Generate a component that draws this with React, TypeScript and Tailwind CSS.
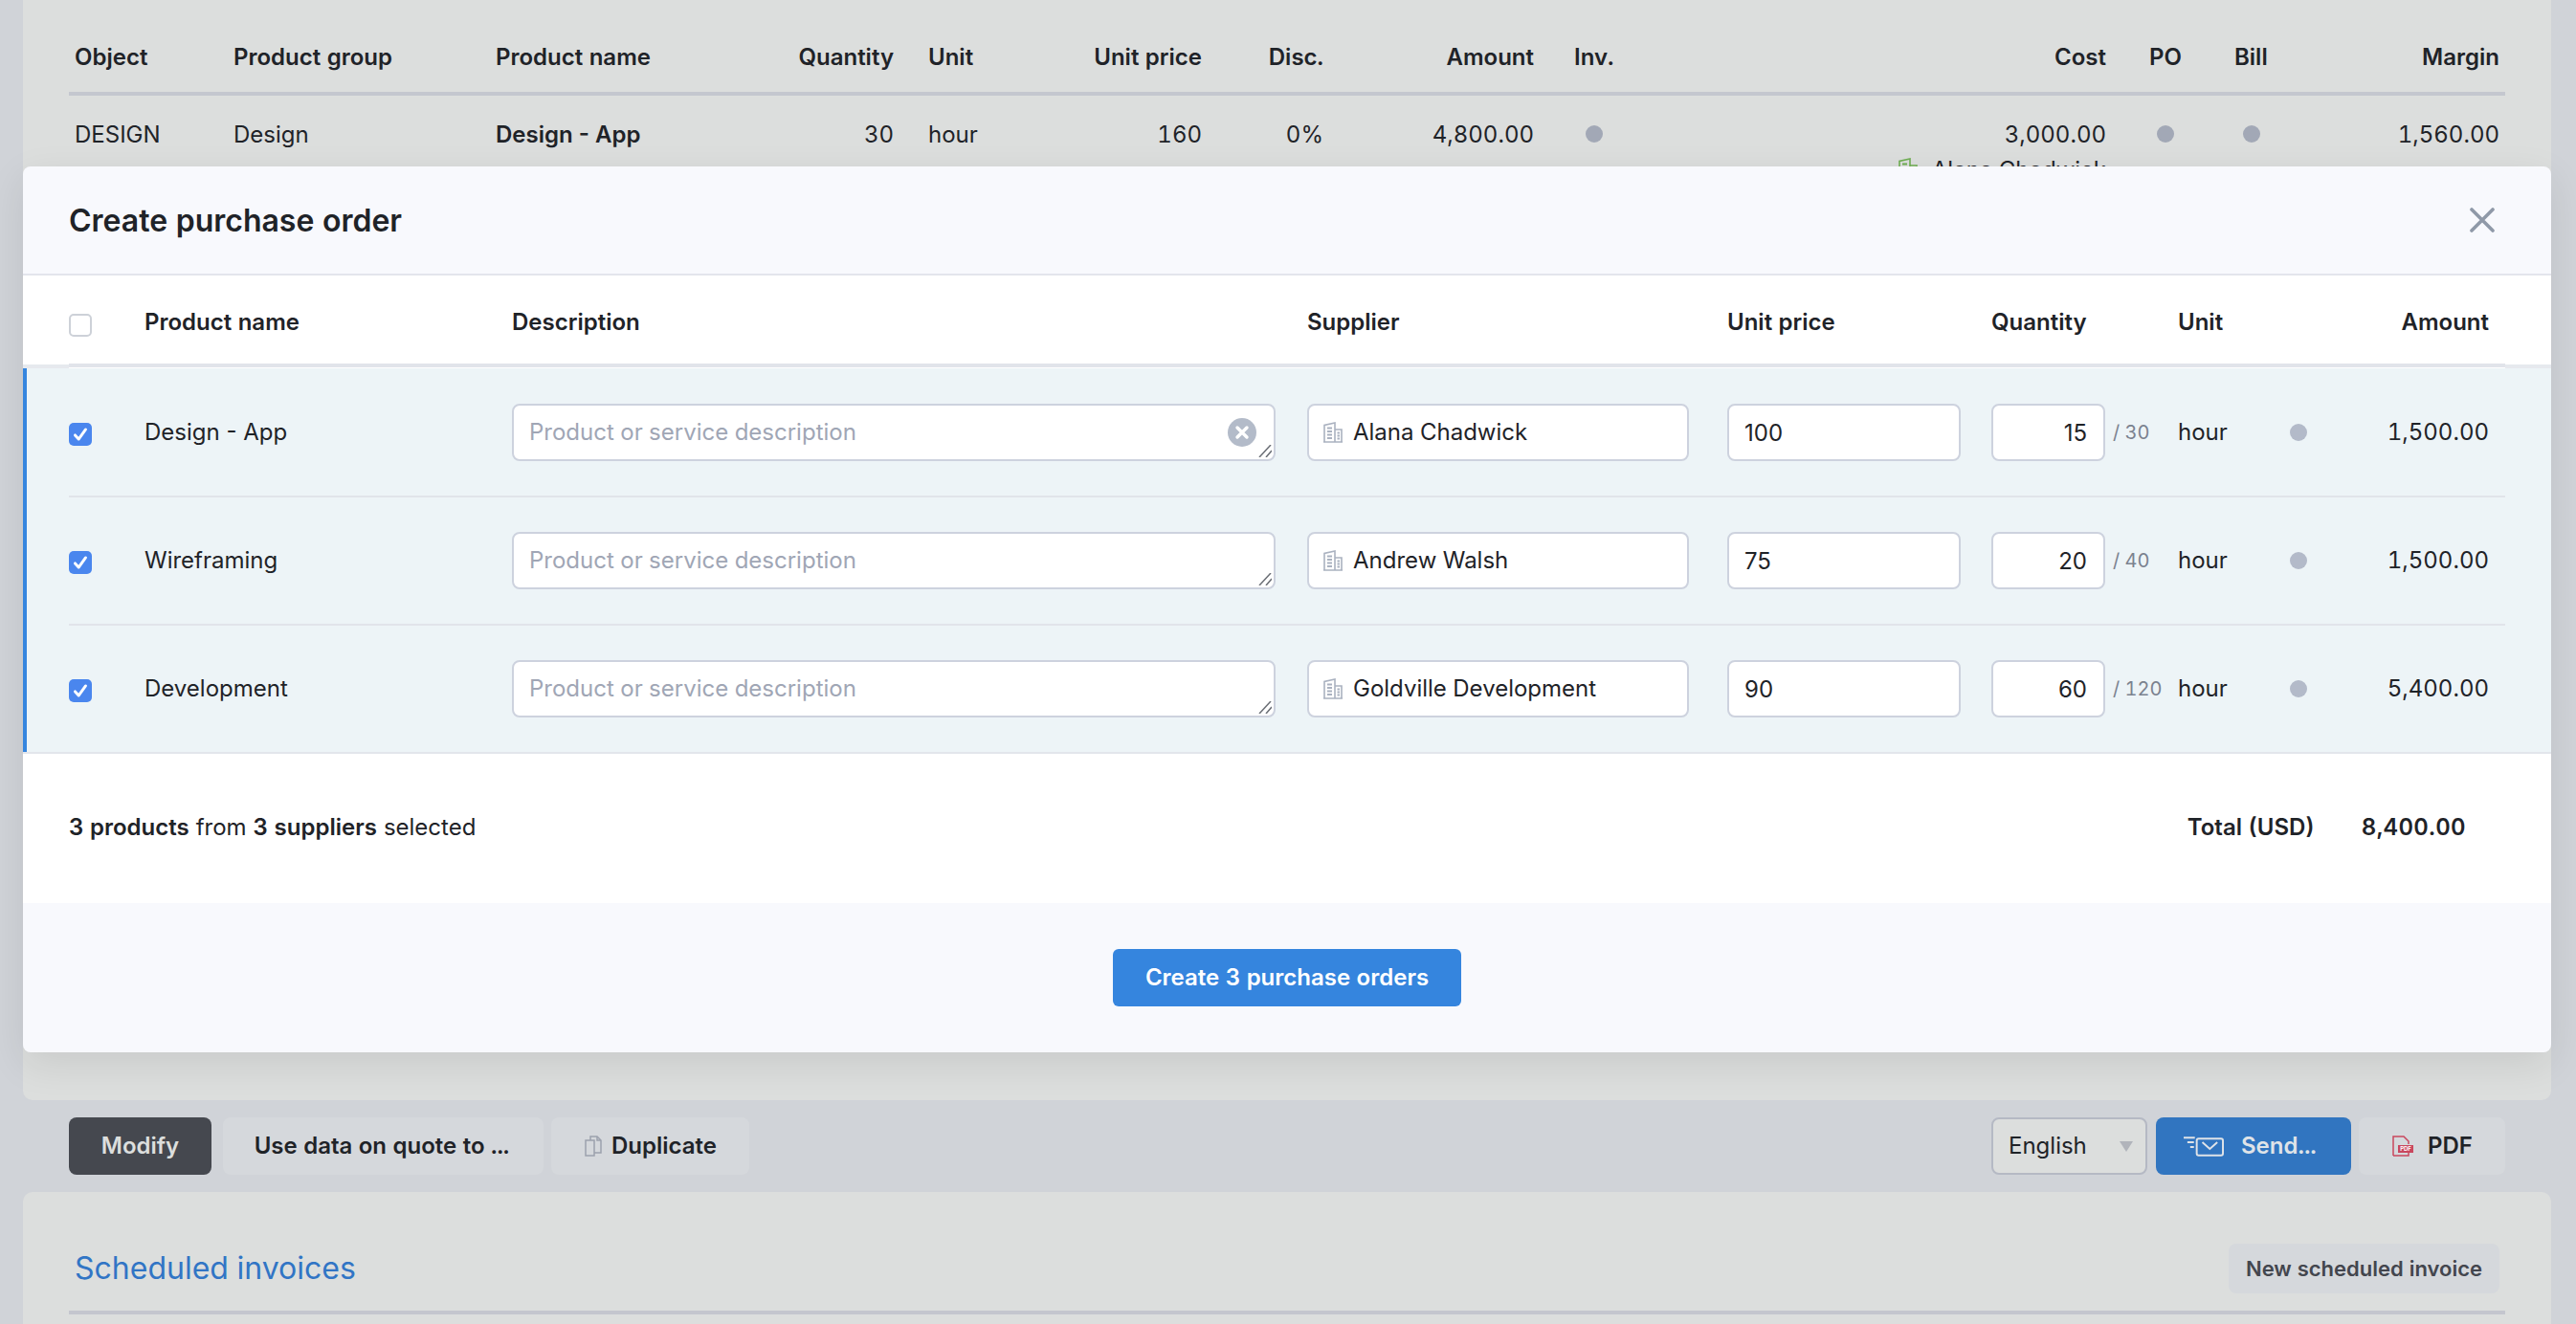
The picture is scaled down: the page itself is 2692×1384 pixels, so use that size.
import React from 'react';

const BuildingIcon = ({ className = 'text-[#aab2c0]' }: { className?: string }) => (
  <svg viewBox="0 0 20 22" className={`w-[20px] h-[22px] shrink-0 ${className}`} fill="none" stroke="currentColor" strokeWidth="1.6">
    <path d="M1 21V3.5L12 1v20M12 8h7v13M0 21h20" />
    <path d="M4 6.5h5M4 10h5M4 13.5h5M4 17h5M14.5 11.5h2.5M14.5 14.5h2.5M14.5 17.5h2.5" strokeWidth="1.8" />
  </svg>
);

const CheckBox = ({ checked }: { checked?: boolean }) =>
  checked ? (
    <span className="flex items-center justify-center w-[24px] h-[24px] rounded-[5px] bg-[#4a86ee]">
      <svg viewBox="0 0 24 24" className="w-[22px] h-[22px]" fill="none" stroke="#fff" strokeWidth="3.2" strokeLinecap="round" strokeLinejoin="round">
        <path d="M6 13l4 4.5 8-11" />
      </svg>
    </span>
  ) : (
    <span className="block w-[24px] h-[24px] rounded-[5px] border-2 border-[#cdd1d8] bg-white" />
  );

const Dot = ({ className }: { className: string }) => <span className={`block w-[18px] h-[18px] rounded-full ${className}`} />;

const topCols = 'grid grid-cols-[166px_274px_288px_142px_188px_130px_127px_220px_97px_501px_89px_106px_218px]';
const modalCols = 'grid grid-cols-[79px_384px_831px_439px_276px_195px_117px_40px_168px_17px] items-center';
const inputBox = 'h-[60px] rounded-[8px] border-2 border-[#cdd2de] bg-white outline-none text-[24px]';

const rows = [
  { name: 'Design - App', supplier: 'Alana Chadwick', price: '100', qty: '15', total: '/ 30', amount: '1,500.00', clear: true },
  { name: 'Wireframing', supplier: 'Andrew Walsh', price: '75', qty: '20', total: '/ 40', amount: '1,500.00' },
  { name: 'Development', supplier: 'Goldville Development', price: '90', qty: '60', total: '/ 120', amount: '5,400.00' },
];

export default function App() {
  return (
    <div className="relative w-[2692px] h-[1384px] overflow-hidden bg-[#d0d3d8] px-[24px] font-[Inter,sans-serif] tabular-nums text-[24px] leading-[30px] text-[#1f2328]">
      {/* Page behind the dialog */}
      <div className="h-[1150px] w-[2642px] rounded-b-[10px] bg-[#dcdedd] px-[48px] overflow-hidden">
        <div className={`${topCols} h-[100px] pt-[45px] border-b-4 border-[#c4c7cf] font-semibold`}>
          <div className="pl-[6px]">Object</div>
          <div className="pl-[6px]">Product group</div>
          <div className="pl-[6px]">Product name</div>
          <div className="pr-[8px] text-right">Quantity</div>
          <div className="pl-[28px]">Unit</div>
          <div className="pr-[4px] text-right">Unit price</div>
          <div className="pr-[4px] text-right">Disc.</div>
          <div className="pr-[4px] text-right">Amount</div>
          <div className="pl-[38px]">Inv.</div>
          <div className="pr-[4px] text-right">Cost</div>
          <div className="pl-[41px]">PO</div>
          <div className="pl-[41px]">Bill</div>
          <div className="pr-[6px] text-right">Margin</div>
        </div>
        <div className={`${topCols} pt-[26px]`}>
          <div className="pl-[6px]">DESIGN</div>
          <div className="pl-[6px]">Design</div>
          <div className="pl-[6px] font-semibold normal-nums">Design - App</div>
          <div className="pr-[8px] text-right">30</div>
          <div className="pl-[28px]">hour</div>
          <div className="pr-[4px] text-right">160</div>
          <div className="pr-[4px] text-right">0%</div>
          <div className="pr-[4px] text-right">4,800.00</div>
          <div className="pl-[50px] pt-[5px]"><Dot className="bg-[#a2a8b6]" /></div>
          <div className="pr-[4px] text-right">
            3,000.00
            <div className="mt-[7px] flex items-start justify-end gap-[15px]">
              <span className="pt-[2px]"><BuildingIcon className="text-[#6fae52]" /></span>
              Alana Chadwick
            </div>
          </div>
          <div className="pl-[49px] pt-[5px]"><Dot className="bg-[#a2a8b6]" /></div>
          <div className="pl-[50px] pt-[5px]"><Dot className="bg-[#a2a8b6]" /></div>
          <div className="pr-[6px] text-right">1,560.00</div>
        </div>
      </div>

      {/* Action bar */}
      <div className="mt-[18px] h-[60px] px-[48px] w-[2642px] flex items-stretch font-semibold">
        <button className="w-[149px] rounded-[8px] bg-[#45484f] text-[#dcdedd]">Modify</button>
        <button className="ml-[12px] w-[335px] pr-[3px] rounded-[8px] bg-[#d5d8dc]">Use data on quote to ...</button>
        <button className="ml-[8px] w-[207px] rounded-[8px] bg-[#d5d8dc] flex items-center pl-[35px] gap-[10px]">
          <svg viewBox="0 0 18 22" className="w-[18px] h-[22px]" fill="none" stroke="#9ca1ad" strokeWidth="1.5">
            <path d="M1 5h9l0 0v16H1zM6 5V1h7l4 4v13h-7" />
            <path d="M13 1v4h4" />
          </svg>
          Duplicate
        </button>
        <div className="ml-auto relative w-[163px] mr-[9px]">
          <select defaultValue="English" className="appearance-none w-full h-full rounded-[8px] border-2 border-[#b5b9c4] bg-[#dcdedd] pl-[16px] font-normal outline-none">
            <option>English</option>
          </select>
          <span className="absolute right-[15px] top-[25px] w-0 h-0 border-x-[7px] border-x-transparent border-t-[11px] border-t-[#b1b4bb]" />
        </div>
        <button className="w-[204px] rounded-[8px] bg-[#3175c0] text-[#dfe3e8] flex items-center pl-[28px] gap-[18px]">
          <svg viewBox="0 0 44 22" className="w-[43px] h-[22px]" fill="none" stroke="currentColor" strokeWidth="2">
            <rect x="15" y="3" width="28" height="18" rx="2" />
            <path d="M21 7l8 7 8-7M1 2h12M5 7h7M8 12h4" />
          </svg>
          Send...
        </button>
        <button className="ml-[8px] w-[153px] rounded-[8px] bg-[#d5d8dc] flex items-center pl-[35px] gap-[15px]">
          <svg viewBox="0 0 22 22" className="w-[22px] h-[22px]" fill="none">
            <path d="M1 21V1h11l5 5v3M1 21h16v-3" stroke="#c9475e" strokeWidth="1.5" />
            <rect x="6" y="10" width="16" height="8" fill="#c9475e" />
            <text x="14" y="16.2" textAnchor="middle" fontSize="6" fontWeight="700" fill="#fff">PDF</text>
          </svg>
          PDF
        </button>
      </div>

      {/* Scheduled invoices card */}
      <div className="mt-[18px] h-[200px] w-[2642px] rounded-t-[10px] bg-[#dcdedd] px-[48px]">
        <div className="h-[128px] border-b-4 border-[#c4c6ce] flex items-center justify-between pt-[54px] pb-[18px] px-[6px]">
          <span className="text-[32px] leading-[40px] text-[#3175c5]">Scheduled invoices</span>
          <button className="h-[52px] px-[18px] rounded-[8px] bg-[#d5d8dc] text-[22px] font-semibold text-[#43464e]">New scheduled invoice</button>
        </div>
      </div>

      {/* Dialog */}
      <div className="absolute left-[24px] top-[174px] w-[2642px] rounded-[8px] overflow-hidden shadow-[0_12px_40px_rgba(0,0,0,0.09)]">
        <div className="h-[114px] bg-[#f8f9fd] border-b-2 border-[#e3e5ec] pl-[48px] pr-[59px] flex items-center justify-between">
          <h2 className="pt-[2px] text-[32px] leading-[40px] font-semibold">Create purchase order</h2>
          <svg viewBox="0 0 26 26" className="w-[26px] h-[26px]" fill="none" stroke="#8f99a8" strokeWidth="3.6" strokeLinecap="round">
            <path d="M2 2l22 22M24 2L2 24" />
          </svg>
        </div>

        <div className="flex h-[97px] bg-white font-semibold">
          <div className="w-[48px] h-full border-b-4 border-[#e6e9ee]" />
          <div className={`${modalCols} w-[2546px] h-[96px] border-b-4 border-[#e1e4ea] pt-[6px]`}>
            <div className="pt-[6px]"><CheckBox /></div>
            <div>Product name</div>
            <div>Description</div>
            <div>Supplier</div>
            <div>Unit price</div>
            <div>Quantity</div>
            <div>Unit</div>
            <div />
            <div className="text-right">Amount</div>
          </div>
          <div className="w-[48px] h-full border-b-4 border-[#e6e9ee]" />
        </div>

        <div className="border-l-4 border-[#3585de] bg-[#edf4f7] pt-px pl-[44px]">
          {rows.map((r, i) => (
            <div key={r.name} className={`${modalCols} w-[2546px] ${i < 2 ? 'h-[134px] border-b-2 border-[#e1e4ea]' : 'h-[132px]'}`}>
              <div className="pt-[4px]"><CheckBox checked /></div>
              <div className="normal-nums">{r.name}</div>
              <div className="relative w-[798px] h-[60px]">
                <textarea
                  placeholder="Product or service description"
                  className={`${inputBox} block w-full resize-none py-[13px] pl-[16px] leading-[30px] placeholder:text-[#a0a6b5]`}
                />
                <svg viewBox="0 0 15 13" className="absolute right-[4px] bottom-[4px] w-[15px] h-[13px]" fill="none" stroke="#6b6f76" strokeWidth="1.5">
                  <path d="M14 0L2 13M15 6l-6 7" />
                </svg>
                {r.clear && (
                  <svg viewBox="0 0 30 30" className="absolute right-[20px] top-[15px] w-[30px] h-[30px]">
                    <circle cx="15" cy="15" r="15" fill="#b3bbc9" />
                    <path d="M10 10l10 10M20 10L10 20" stroke="#fff" strokeWidth="3.4" strokeLinecap="round" />
                  </svg>
                )}
              </div>
              <div className={`${inputBox} w-[399px] flex items-center pl-[15px] gap-[11px]`}>
                <BuildingIcon />
                {r.supplier}
              </div>
              <input defaultValue={r.price} className={`${inputBox} w-[244px] pl-[16px] normal-nums`} />
              <div className="flex items-center">
                <input defaultValue={r.qty} className={`${inputBox} w-[119px] pr-[17px] text-right normal-nums`} />
                <span className="ml-[8px] text-[20px] text-[#7b828f]">{r.total}</span>
              </div>
              <div>hour</div>
              <Dot className="bg-[#b3bac9]" />
              <div className="text-right">{r.amount}</div>
            </div>
          ))}
        </div>

        <div className="h-[158px] bg-white border-t-2 border-[#e3e6ec] pb-[2px] pl-[48px] flex items-center">
          <span className="font-semibold">3 products</span>
          <span className="ml-[7px]">from</span>
          <span className="ml-[7px] font-semibold">3 suppliers</span>
          <span className="ml-[7px]">selected</span>
          <span className="ml-auto font-semibold">Total (USD)</span>
          <span className="ml-[49px] mr-[89px] font-semibold tracking-[0.4px]">8,400.00</span>
        </div>

        <div className="h-[156px] bg-[#f8f9fd] flex justify-center pt-[48px]">
          <button className="w-[364px] h-[60px] rounded-[6px] bg-[#3585de] text-white font-semibold">Create 3 purchase orders</button>
        </div>
      </div>
    </div>
  );
}
